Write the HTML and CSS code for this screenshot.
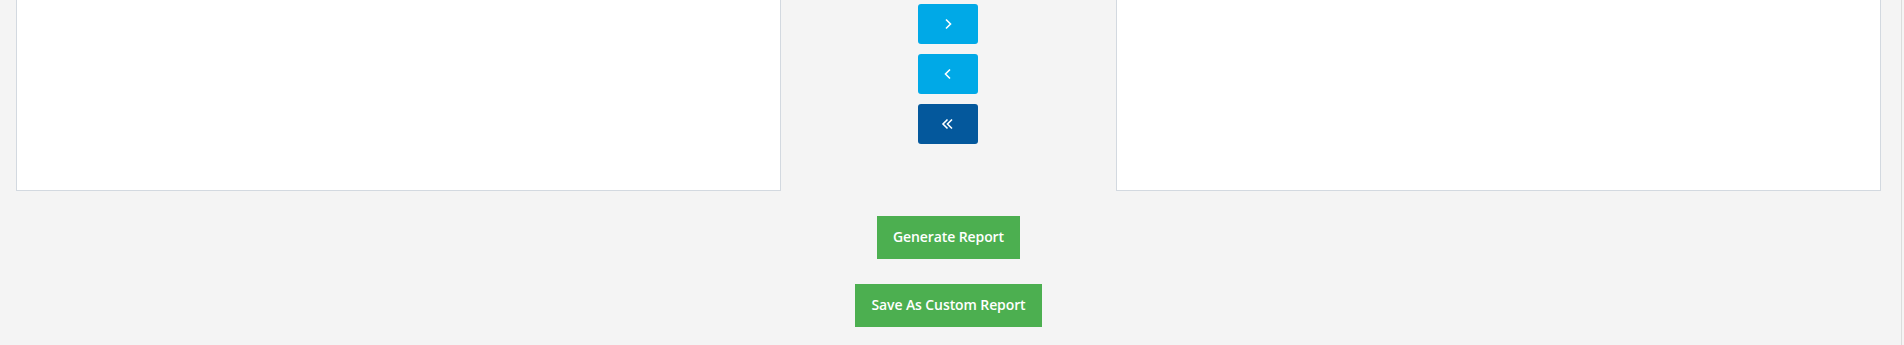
FILE: index.html
```html
<!DOCTYPE html>
<html lang="en">

<head>
    <meta charset="UTF-8">
    <meta name="viewport" content="width=device-width, initial-scale=1.0">
    <title>Custom Report</title>
    <link rel="stylesheet" href="styles.css">
</head>

<body>
    <div class="page">
        <div class="picker">
            <div class="list-box"></div>

            <div class="move-buttons">
                <button class="move-btn" title="Add">
                    <svg width="10" height="12" viewBox="0 0 10 12"><path d="M3 1.5 L7.5 6 L3 10.5" fill="none" stroke="#fff" stroke-width="1.6"/></svg>
                </button>
                <button class="move-btn" title="Remove">
                    <svg width="10" height="12" viewBox="0 0 10 12"><path d="M7 1.5 L2.5 6 L7 10.5" fill="none" stroke="#fff" stroke-width="1.6"/></svg>
                </button>
                <button class="move-btn move-all" title="Remove all">
                    <svg width="14" height="12" viewBox="0 0 14 12"><path d="M6.5 1.5 L2 6 L6.5 10.5 M11 1.5 L6.5 6 L11 10.5" fill="none" stroke="#fff" stroke-width="1.6"/></svg>
                </button>
            </div>

            <div class="list-box"></div>
        </div>

        <div class="actions">
            <button class="report-btn generate-btn">Generate Report</button>
            <button class="report-btn save-btn">Save As Custom Report</button>
        </div>
    </div>
</body>

</html>
```

FILE: styles.css
```css
* {
    margin: 0;
    padding: 0;
    box-sizing: border-box;
}

html,
body {
    height: 100%;
}

body {
    font-family: 'Open Sans', sans-serif;
    background: #f4f4f4;
    color: #333;
    overflow: hidden;
}

.page {
    width: 1902px;
    height: 100%;
    border-right: 1px solid #dcdcdc;
    padding-left: 16px;
}

.picker {
    display: grid;
    grid-template-columns: 765px 335px 765px;
}

.list-box {
    height: 191px;
    background: #ffffff;
    border: 1px solid #d3d9e0;
    border-top: 0;
}

.move-buttons {
    display: flex;
    flex-direction: column;
    align-items: flex-start;
    gap: 10px;
    padding-top: 4px;
    padding-left: 137px;
}

.move-btn {
    width: 60px;
    height: 40px;
    border: none;
    border-radius: 3px;
    background: #00a9e7;
    display: flex;
    justify-content: center;
    align-items: center;
    cursor: pointer;
}

.move-all {
    background: #04589c;
}

.actions {
    width: 1865px;
    display: flex;
    flex-direction: column;
    align-items: center;
    gap: 25px;
    padding-top: 25px;
}

.report-btn {
    height: 43px;
    border: none;
    background: #4caf50;
    color: #fff;
    font-family: 'Open Sans', sans-serif;
    font-size: 14px;
    font-weight: 600;
    letter-spacing: -0.1px;
    padding-bottom: 2px;
    cursor: pointer;
}

.generate-btn {
    width: 143px;
}

.save-btn {
    width: 187px;
}
```
